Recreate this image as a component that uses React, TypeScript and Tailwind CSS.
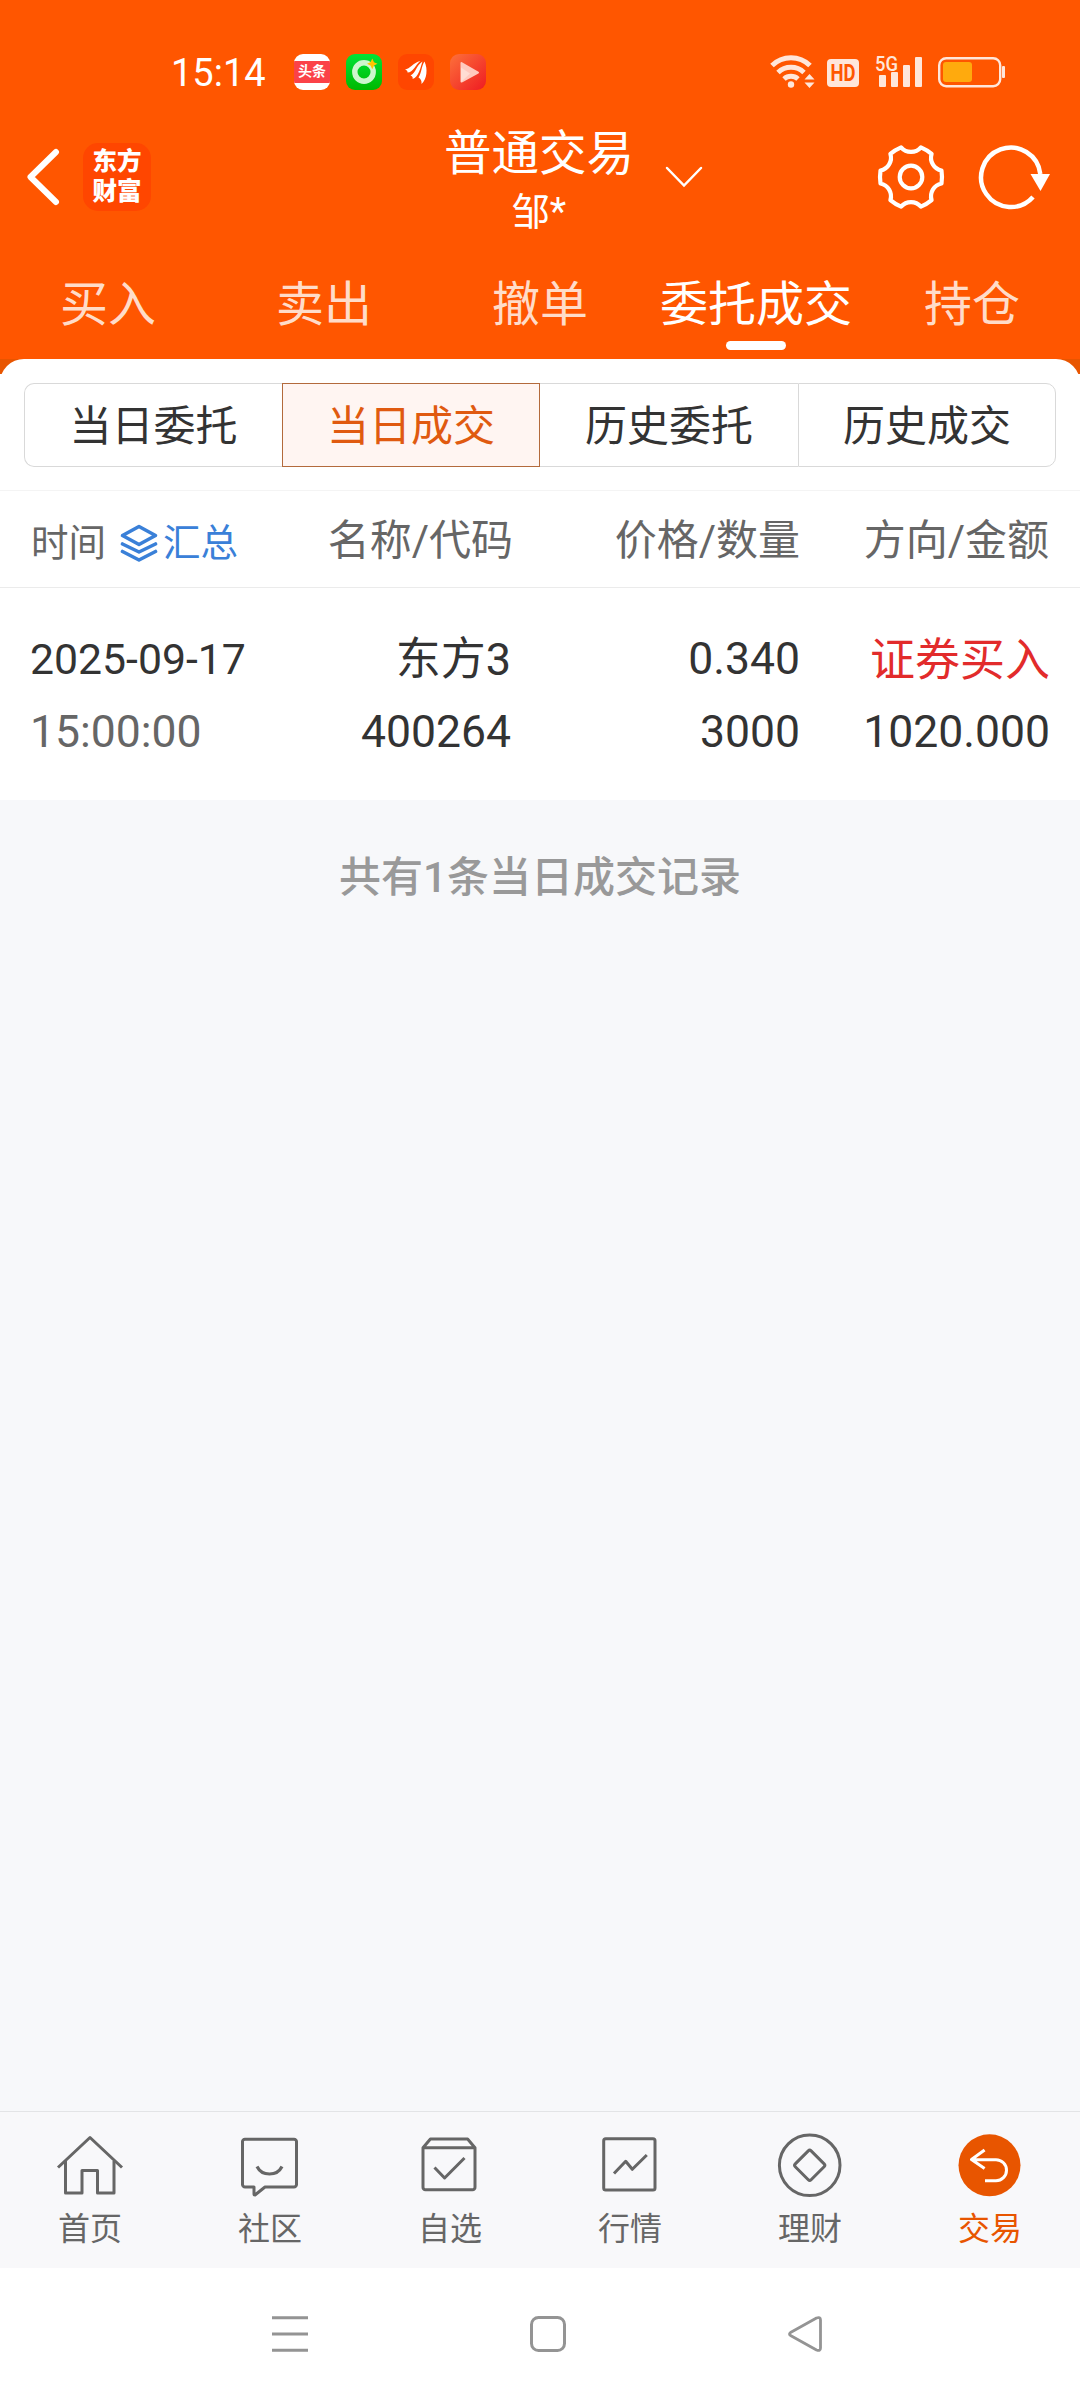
import type { ReactNode } from "react";

const TABS = ["买入", "卖出", "撤单", "委托成交", "持仓"];
const SEGMENTS = ["当日委托", "当日成交", "历史委托", "历史成交"];

function StatusBar(){
    return <div className="flex h-[100px] items-center justify-between pt-11 pl-[171px] pr-[74px]">
        <div className="flex items-center">
            <span className="w-[123px] pt-0.5 text-[38px] leading-none text-white">15:14</span>
            <div className="flex gap-4">
                <div className="flex h-9 w-9 items-center overflow-hidden rounded-[9px] bg-white">
                    <div className="h-[22px] w-9 bg-[#fb4248] text-center text-[14px] leading-[21px] font-bold text-white">头条</div>
                </div>
                <svg width="36" height="36" viewBox="0 0 36 36">
                    <defs>
                        <linearGradient id="green" x1="0" y1="0" x2="0" y2="1">
                            <stop offset="0" stopColor="#00e336" />
                            <stop offset="1" stopColor="#00b800" />
                        </linearGradient>
                    </defs>
                    <rect width="36" height="36" rx="9" fill="url(#green)" />
                    <circle cx="18" cy="18" r="9.2" fill="none" stroke="#cdf6cd" strokeWidth="5.4" />
                    <path d="M26.3 4.5 28 8.2 31.5 9.8 28 11.6 26.3 15.3 24.5 11.6 21 9.8 24.5 8.2Z" fill="#ffc400" />
                </svg>
                <svg width="36" height="36" viewBox="0 0 36 36">
                    <rect width="36" height="36" rx="9" fill="#ff4600" />
                    <path d="M7 15.500C12 15 15 8.500 22.500 7C18 10 15 18.500 9.500 18.500C10 17.500 8.500 16 7 15.500Z" fill="#fff" />
                    <path d="M12.500 21.500C18 19 18 11.500 24.500 7.500C22.500 13 21 23 14.500 25C15.500 23.500 14 22 12.500 21.500Z" fill="#fff" />
                    <path d="M20.500 23.500C23.500 19 23.500 12 26.500 7.500C30 15 29 25 23.500 30C24 27 22.500 24.500 20.500 23.500Z" fill="#fff" />
                </svg>
                <svg width="36" height="36" viewBox="0 0 36 36">
                    <defs>
                        <linearGradient id="red" x1="0" y1="0" x2="1" y2="1">
                            <stop offset="0.1" stopColor="#fb6838" />
                            <stop offset="1" stopColor="#ef1b22" />
                        </linearGradient>
                    </defs>
                    <rect width="36" height="36" rx="9" fill="url(#red)" />
                    <path d="M11.500 9 28 18.500 11.500 27.500Z" fill="#ffc9be" stroke="#ffc9be" strokeWidth="2" strokeLinejoin="round" />
                    <path d="M11 13.500 20 19.500 11 28Z" fill="#ffddd4" />
                </svg>
            </div>
        </div>
        <svg width="236" height="52" viewBox="0 -8 236 52" fill="#ffe6da">
            <g fill="none" stroke="#ffe6da" strokeWidth="5">
                <path d="M2 11.500A27 27 0 0 1 40 11.500" />
                <path d="M8 18.500A19 19 0 0 1 34 18.500" />
                <path d="M14 25A10.500 10.500 0 0 1 28 25" />
            </g>
            <circle cx="21" cy="30.500" r="3.200" />
            <path d="M34.500 25.500 39.500 20 44.500 25.500ZM34.500 28.500 39.500 34 44.500 28.500Z" />
            <rect x="57" y="5" width="32" height="28" rx="4" />
            <text x="73" y="27.200" textAnchor="middle" fontSize="23.500" fontWeight="700" textLength="25" lengthAdjust="spacingAndGlyphs" fill="#ff5600">HD</text>
            <text x="105" y="16.500" fontSize="21" fontWeight="500" textLength="23" lengthAdjust="spacingAndGlyphs">5G</text>
            <rect x="109" y="21" width="7" height="12" rx="1" />
            <rect x="121" y="18" width="7" height="15" rx="1" />
            <rect x="133" y="11" width="7" height="22" rx="1" />
            <rect x="145" y="3" width="7" height="30" rx="1" />
            <rect x="169.200" y="4.200" width="61" height="28" rx="7" fill="none" stroke="#ffe6da" strokeWidth="2.400" />
            <rect x="173" y="8" width="29" height="20" rx="3" fill="#ffaa0d" />
            <rect x="232" y="12" width="3" height="12" rx="1" />
        </svg>
    </div>
}

function Header(){
    return <div className="grid h-[150px] grid-cols-[1fr_auto_1fr] pl-[26px] pr-[28px] text-white">
        <div className="flex items-center gap-[23px] pt-1">
            <svg width="34" height="60" viewBox="0 0 34 60" fill="none" stroke="currentColor" strokeWidth="6" strokeLinecap="round" strokeLinejoin="round">
                <path d="M30 5 4.500 30 30 55" />
            </svg>
            <div className="h-[68px] w-[68px] rounded-[15px] bg-[#ff4600] pt-[4px] text-center text-[24.500px] leading-[30px] font-black">
                <div>东方</div>
                <div>财富</div>
            </div>
        </div>
        <div className="pt-[27px] text-center">
            <div className="text-[47.500px] leading-[54px]">普通交易</div>
            <div className="text-[38px] leading-[62px]">邹*</div>
        </div>
        <div className="flex items-center justify-between pt-[3px] pl-[31px]">
            <svg width="38" height="24" viewBox="0 0 38 24" fill="none" stroke="currentColor" strokeWidth="2.500" strokeLinecap="round">
                <path d="M2 3 19 20.500 36 3" />
            </svg>
            <div className="flex gap-[33px]">
                <svg width="68" height="68" viewBox="-34 -34 68 68" fill="none" stroke="currentColor" strokeWidth="4.200" strokeLinejoin="round">
                    <path d="M30.500-6.500Q31.500 0 30.500 6.500A13 13 0 0 0 20.600 23.100Q16 27 9.900 29.600A13 13 0 0 0-9.900 29.600Q-16 27-20.600 23.100A13 13 0 0 0-30.500 6.500Q-31.500 0-30.500-6.500A13 13 0 0 0-20.600-23.100Q-16-27-9.900-29.600A13 13 0 0 0 9.900-29.600Q16-27 20.600-23.100A13 13 0 0 0 30.500-6.500Z" />
                    <circle r="11.300" />
                </svg>
                <svg width="74" height="68" viewBox="-33 -34 74 68">
                    <path d="M22 20A29.700 29.700 0 1 1 29.300-3" fill="none" stroke="currentColor" strokeWidth="4.500" />
                    <path d="M19.500-3H39L29.500 14Z" fill="currentColor" />
                </svg>
            </div>
        </div>
    </div>
}

function Tabs(){
    return <div className="grid h-[109px] grid-cols-5 text-center text-[48px] leading-[60px] text-[#ffdcc9]">
        {TABS.map((tab, i) => <div key={tab} className={i === 3 ? "pt-[25px] text-white" : "pt-[25px]"}>
            {tab}
            {i === 3 && <div className="mx-auto mt-1.5 h-[9px] w-[60px] rounded-full bg-white" />}
        </div>)}
    </div>
}

function Segments(){
    return <div className="mx-6 grid h-[84px] grid-cols-4 text-center text-[42px] leading-[78px] text-[#333]">
        {SEGMENTS.map((label, i) => {
            let style = "";
            if (i === 0) style = "rounded-l-[10px] border border-r-0 border-[#d9d9d9] pt-1";
            if (i === 1) style = "border border-[#b36a3c] bg-[#fff5f2] pt-1 text-[#e05a10]";
            if (i === 2) style = "border-y border-[#d9d9d9] pt-1";
            if (i === 3) style = "rounded-r-[10px] border border-[#d9d9d9] pt-1";
            return <div key={label} className={style}>{label}</div>
        })}
    </div>
}

function TableHead(){
    return <div className="flex h-[98px] items-center border-y border-t-[#f4f4f4] border-b-[#ebebeb] pt-1 text-[42px] leading-[60px] text-[#666]">
        <div className="flex w-[280px] items-center pl-[31px] pt-1 text-[37.500px]">
            时间
            <svg className="ml-[14px] mr-[5px]" width="38" height="38" viewBox="0 0 38 38" fill="none" stroke="#3a80d8" strokeWidth="3.600" strokeLinecap="round" strokeLinejoin="round">
                <path d="M19 2.500 35.500 11.500 19 20.500 2.500 11.500Z" />
                <path d="M2.500 20 19 28 35.500 20M2.500 27.500 19 36 35.500 27.500" />
            </svg>
            <span className="text-[#3a80d8]">汇总</span>
        </div>
        <div className="w-[233px] text-right">名称/代码</div>
        <div className="w-[287px] text-right">价格/数量</div>
        <div className="w-[249px] text-right">方向/金额</div>
    </div>
}

function Row(){
    return <div className="flex h-[212px] pt-[35px] text-[44.500px] leading-[73px] text-[#333]">
        <div className="w-[280px] pl-[30px]">
            <div className="text-[42.750px]">2025-09-17</div>
            <div className="text-[#666]">15:00:00</div>
        </div>
        <div className="w-[231px] text-right">
            <div className="text-[45px]">东方3</div>
            <div>400264</div>
        </div>
        <div className="w-[289px] text-right">
            <div>0.340</div>
            <div>3000</div>
        </div>
        <div className="w-[250px] text-right">
            <div className="pt-0.5 text-[45px] leading-[71px] text-[#e22b2b]">证券买入</div>
            <div>1020.000</div>
        </div>
    </div>
}

function NavItem({ label, active, children }: { label: string; active?: boolean; children: ReactNode }){
    return <div className={active ? "flex flex-col items-center text-[#e85500]" : "flex flex-col items-center text-[#666]"}>
        <svg width="72" height="72" viewBox="0 0 72 72" fill="none" stroke="currentColor" strokeWidth="3" strokeLinejoin="round">
            {children}
        </svg>
        <span className="text-[32px] leading-[55px]">{label}</span>
    </div>
}

function BottomNav(){
    return <div className="grid h-[157px] grid-cols-6 border-t border-[#e3e4e6] bg-[#f8f8fa] pt-[18px]">
        <NavItem label="首页">
            <path d="M4 37.500 36 7.500 68 37.500" />
            <path d="M11.500 31V63H28V40.500H43.500V63H60V31" />
        </NavItem>
        <NavItem label="社区">
            <path d="M11 9.300H60A2.500 2.500 0 0 1 62.500 12V54.500A2.500 2.500 0 0 1 60 57H31L21 65Q20 65 20 64V57H11A2.500 2.500 0 0 1 8.500 54.500V12A2.500 2.500 0 0 1 11 9.300Z" />
            <path d="M23 36.500C28 46.500 43 46.500 48 36.500" strokeWidth="3.200" />
        </NavItem>
        <NavItem label="自选">
            <path d="M9 17.700 16.400 9H53.600L61 17.700V57A2.500 2.500 0 0 1 58.500 59.700H11.500A2.500 2.500 0 0 1 9 57ZM9 17.700H61" />
            <path d="M20.500 37.500 30.600 48 50.500 28" />
        </NavItem>
        <NavItem label="行情">
            <rect x="9.700" y="8.700" width="51.300" height="51.300" rx="2" />
            <path d="M20 43.500 31.700 31.300 38.300 39.300 52.800 25" />
        </NavItem>
        <NavItem label="理财">
            <circle cx="35.700" cy="35.300" r="30.300" />
            <rect x="24.500" y="24.100" width="22.400" height="22.400" rx="2" transform="rotate(45 35.700 35.300)" />
        </NavItem>
        <NavItem label="交易" active>
            <circle cx="35.500" cy="35.300" r="31" fill="currentColor" stroke="none" />
            <path d="M30.600 20 17.500 29.500 30.600 38.500M17.500 29.700H42A10.500 10.500 0 0 1 42 50.700H31" stroke="#fff" />
        </NavItem>
    </div>
}

function SystemNav(){
    return <div className="flex h-[132px] items-center justify-between bg-white pl-[271px] pr-[256px]">
        <svg width="38" height="38" viewBox="0 0 38 38" stroke="#949494" strokeWidth="3">
            <path d="M1 2.700H37M1 19H37M1 35.300H37" />
        </svg>
        <svg width="38" height="38" viewBox="0 0 38 38" fill="none" stroke="#949494" strokeWidth="3">
            <rect x="2.500" y="2.500" width="33" height="33" rx="7" />
        </svg>
        <svg width="38" height="38" viewBox="0 0 38 38" fill="none" stroke="#949494" strokeWidth="2.800" strokeLinejoin="round">
            <path d="M4.500 17.500 30.500 3Q34.500 1.500 34.500 5V33Q34.500 36.500 30.500 35L4.500 20.500Q2.500 19 4.500 17.500Z" />
        </svg>
    </div>
}

export default function App(){
    return <div className="flex h-[2400px] w-[1080px] flex-col bg-[#f7f8fa] font-['Roboto','Noto_Sans_CJK_SC',sans-serif]">
        <div className="bg-[#ff5600]">
            <StatusBar />
            <Header />
            <Tabs />
        </div>
        <div className="bg-[linear-gradient(#e85500_15px,#fff_15px)]">
            <div className="rounded-t-[24px] bg-white pt-6">
                <Segments />
                <div className="h-[23px]" />
                <TableHead />
                <Row />
            </div>
        </div>
        <div className="grow pt-[48px] text-center text-[42px] leading-[60px] font-medium text-[#999]">共有1条当日成交记录</div>
        <BottomNav />
        <SystemNav />
    </div>
}
